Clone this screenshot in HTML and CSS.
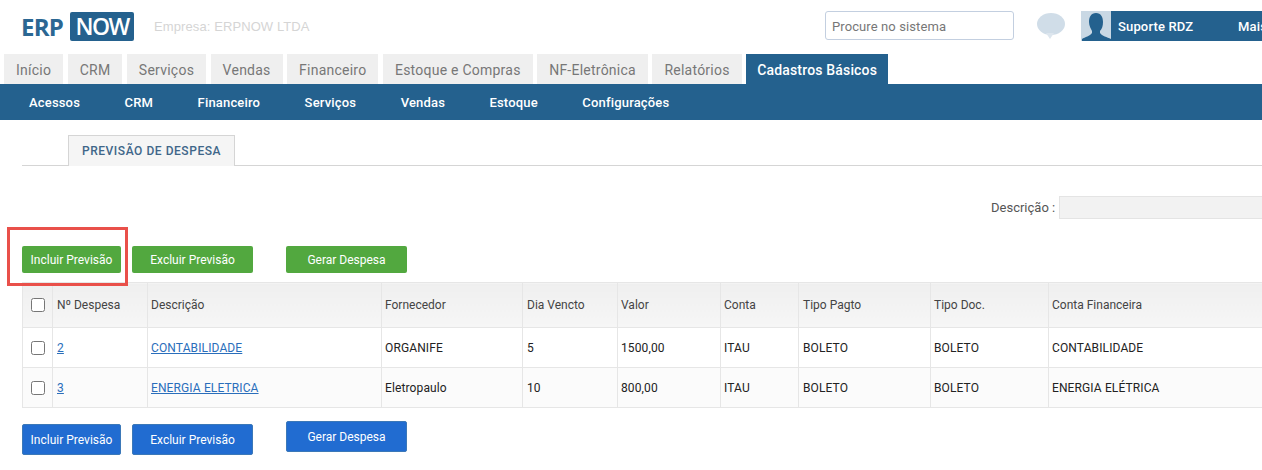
FILE: index.html
```html
<!DOCTYPE html>
<html lang="pt">
<head>
<meta charset="utf-8">
<title>ERP NOW</title>
<link rel="stylesheet" href="styles.css">
</head>
<body>
<header class="top">
  <div class="logo"><span class="logo-erp">ERP</span><span class="logo-now">NOW</span></div>
  <div class="company">Empresa: ERPNOW LTDA</div>
  <input class="search" type="text" placeholder="Procure no sistema">
  <svg class="chat" width="30" height="30" viewBox="0 0 30 30"><ellipse cx="15" cy="12" rx="14" ry="11" fill="#d0dde8"/><path d="M10 21 L14 27 L18 21 Z" fill="#dde6ee"/></svg>
  <div class="user">
    <svg class="avatar" width="30" height="30" viewBox="0 0 30 30"><rect width="30" height="30" fill="#c9d8e4"/><path d="M15 2 C10 2 8 6 8 11 C8 15 10 18 11 20 L11 22 C9 25 4 26 1 28 L1 30 L30 30 L30 28 C26 26 21 25 19 22 L19 20 C21 18 22 15 22 11 C22 6 20 2 15 2 Z" fill="#24618e"/></svg>
    <span class="user-name">Suporte RDZ</span>
    <span class="user-more">Mais</span>
  </div>
</header>
<nav class="tabs">
  <a class="tab">Início</a><a class="tab">CRM</a><a class="tab">Serviços</a><a class="tab">Vendas</a><a class="tab">Financeiro</a><a class="tab">Estoque e Compras</a><a class="tab">NF-Eletrônica</a><a class="tab">Relatórios</a><a class="tab tab-active">Cadastros Básicos</a>
</nav>
<nav class="subnav">
  <a>Acessos</a><a>CRM</a><a>Financeiro</a><a>Serviços</a><a>Vendas</a><a>Estoque</a><a>Configurações</a>
</nav>
<main class="content">
  <div class="page-tabs"><div class="page-tab">PREVISÃO DE DESPESA</div></div>
  <div class="filter"><label class="filter-label">Descrição :</label><input class="filter-input" type="text"></div>
  <div class="actions actions-top">
    <button class="btn green w-incluir">Incluir Previsão</button>
    <button class="btn green w-excluir">Excluir Previsão</button>
    <button class="btn green w-gerar">Gerar Despesa</button>
    <div class="highlight"></div>
  </div>
  <table class="grid">
    <colgroup>
      <col class="c1"><col class="c2"><col class="c3"><col class="c4"><col class="c5"><col class="c6"><col class="c7"><col class="c8"><col class="c9"><col class="c10">
    </colgroup>
    <thead>
      <tr><th class="check"><span class="box"></span></th><th>Nº Despesa</th><th>Descrição</th><th>Fornecedor</th><th>Dia Vencto</th><th>Valor</th><th>Conta</th><th>Tipo Pagto</th><th>Tipo Doc.</th><th>Conta Financeira</th></tr>
    </thead>
    <tbody>
      <tr><td class="check"><span class="box"></span></td><td><a>2</a></td><td><a>CONTABILIDADE</a></td><td>ORGANIFE</td><td>5</td><td>1500,00</td><td>ITAU</td><td>BOLETO</td><td>BOLETO</td><td>CONTABILIDADE</td></tr>
      <tr class="alt"><td class="check"><span class="box"></span></td><td><a>3</a></td><td><a>ENERGIA ELETRICA</a></td><td>Eletropaulo</td><td>10</td><td>800,00</td><td>ITAU</td><td>BOLETO</td><td>BOLETO</td><td>ENERGIA ELÉTRICA</td></tr>
    </tbody>
  </table>
  <div class="actions actions-bottom">
    <button class="btn blue w-incluir">Incluir Previsão</button>
    <button class="btn blue w-excluir">Excluir Previsão</button>
    <button class="btn blue w-gerar raised">Gerar Despesa</button>
  </div>
</main>
</body>
</html>
```
FILE: styles.css
```css
* { box-sizing: border-box; }
html, body { margin: 0; padding: 0; height: 470px; overflow: hidden; background: #fff; }
body { font-family: Roboto, "Liberation Sans", sans-serif; font-size: 12px; color: #333; width: 1262px; }

.top { height: 54px; display: flex; align-items: flex-start; padding-left: 21px; position: relative; }
.logo { display: flex; align-items: center; margin-top: 12px; height: 29px; font-family: "Open Sans", Roboto, sans-serif; font-size: 24px; }
.logo-erp { color: #2b6793; width: 49px; font-weight: 700; letter-spacing: -0.8px; }
.logo-now { background: #24618e; color: #fff; width: 64px; height: 29px; line-height: 28px; text-align: center; border-radius: 2px; font-size: 23px; font-weight: 600; letter-spacing: -1.6px; }
.company { margin: 19px 0 0 20px; width: 671px; font-family: "Liberation Sans", sans-serif; font-size: 13px; letter-spacing: 0.1px; line-height: 15px; color: #d5d5d5; }
.search { margin-top: 11px; width: 189px; height: 29px; border: 1px solid #c3cfe0; border-radius: 3px; padding: 1px 6px 0; font-family: Roboto, sans-serif; font-size: 13px; letter-spacing: 0.1px; outline: 0; }
.search::placeholder { color: #777; opacity: 1; }
.chat { margin: 12px 0 0 22px; flex: none; }
.user { margin: 11px 0 0 15px; height: 30px; width: 181px; background: #24618e; color: #fff; display: flex; align-items: center; font-size: 13px; letter-spacing: 0.15px; font-weight: 500; overflow: hidden; flex: none; }
.avatar { flex: none; }
.user-name { margin-left: 7px; width: 120px; flex: none; }
.user-more { flex: none; }

.tabs { height: 30px; display: flex; gap: 4.5px; padding-left: 4px; }
.tab { height: 30px; line-height: 32px; padding: 0 12px; background: #efefef; color: #777; font-size: 14px; letter-spacing: 0.24px; }
.tab-active { background: #24618e; color: #fff; font-weight: 500; letter-spacing: 0.17px; padding: 0 11px; }

.subnav { height: 36px; background: #24618e; display: flex; gap: 44.5px; padding-left: 29px; align-items: center; }
.subnav a { color: #fff; font-size: 13px; font-weight: 500; letter-spacing: 0.17px; }

.content { padding: 15px 0 0 22px; position: relative; }
.page-tabs { height: 31px; border-bottom: 1px solid #d5d5d5; padding-left: 46px; }
.page-tab { width: 167px; height: 31px; background: #f5f5f5; border: 1px solid #d5d5d5; border-bottom: 0; text-align: center; color: #3f6689; font-weight: 500; line-height: 30px; font-size: 12px; letter-spacing: 0.55px; }
.filter { height: 28px; margin-top: 27px; display: flex; align-items: center; padding-left: 969px; color: #555; font-size: 13px; }
.filter-label { width: 68px; flex: none; white-space: nowrap; }
.filter-input { width: 210px; height: 23px; background: #f2f2f2; border: 1px solid #e4e4e4; outline: 0; flex: none; }

.actions { display: flex; position: relative; }
.actions-top { margin-top: 25px; height: 36px; align-items: flex-start; }
.actions-bottom { margin-top: 16px; align-items: flex-start; }
.btn { height: 27px; border: 0; border-radius: 2px; color: #fff; font-family: Roboto, sans-serif; font-size: 12px; font-weight: 400; padding: 0; flex: none; }
.green { background: #52a83f; }
.blue { background: #216cd1; height: 31px; border: 1px solid #3b78b8; }
.raised { margin-top: -3px; }
.w-incluir { width: 99px; margin-right: 11px; }
.w-excluir { width: 121px; margin-right: 33px; }
.w-gerar { width: 121px; }
.highlight { position: absolute; left: -15px; top: -19px; width: 121px; height: 59px; border: 3px solid #e9504a; pointer-events: none; }

.grid { border-collapse: collapse; table-layout: fixed; width: 1240px; }
.c1 { width: 30px; } .c2 { width: 95px; } .c3 { width: 234px; } .c4 { width: 141px; } .c5 { width: 95px; }
.c6 { width: 103px; } .c7 { width: 78px; } .c8 { width: 132px; } .c9 { width: 118px; } .c10 { width: 214px; }
.grid th, .grid td { border: 1px solid #e6e6e6; padding: 0 3px; text-align: left; font-weight: 400; white-space: nowrap; }
.grid td { letter-spacing: 0.12px; }
.grid th:nth-child(2), .grid td:nth-child(2), .grid th:nth-child(5), .grid td:nth-child(5), .grid th:nth-child(8), .grid td:nth-child(8) { padding-left: 4px; }
.grid th:last-child, .grid td:last-child { border-right: 0; }
.grid th { height: 45px; background: linear-gradient(#efefef, #f6f6f6); color: #444; }
.grid td { height: 40px; color: #222; }
.grid .alt td { background: #fbfbfb; }
.grid a { color: #2a6ebb; text-decoration: underline; }
.grid .check { padding: 0 0 0 8px; }
.box { display: block; width: 14px; height: 14px; border: 1px solid #767676; border-radius: 2.5px; background: #fff; }
```
